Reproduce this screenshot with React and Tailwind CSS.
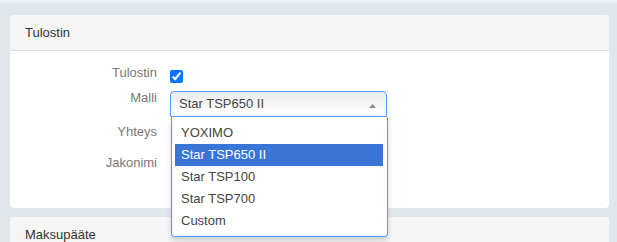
import React from "react";

const font = { fontFamily: '"Liberation Sans", Arial, sans-serif' };

function Panel({ title, children, className = "" }) {
  return (
    <div className={"bg-white rounded-[4px] overflow-visible " + className}>
      <div className="h-[36px] bg-[#f5f5f5] border-b border-[#dddddd] rounded-t-[4px] px-[15px] flex items-center text-[13px] text-[#333333]">
        {title}
      </div>
      {children}
    </div>
  );
}

export default function App() {
  const options = ["YOXIMO", "Star TSP650 II", "Star TSP100", "Star TSP700", "Custom"];
  return (
    <div className="w-[617px] h-[242px] overflow-hidden bg-[#dfe6ec]" style={font}>
      <div className="h-[3px] bg-[#edf1f5] border-b border-[#e6ebf0]" />
      <div className="pt-[12px] pl-[10px] pr-[8px] flex flex-col gap-[9px]">
        <Panel title="Tulostin">
          <div className="h-[157px] pt-[12px] flex flex-col text-[13px]">
            <div className="flex h-[25px]">
              <div className="w-[147px] text-right text-[#777777] leading-[20px]">Tulostin</div>
              <div className="ml-[13px] pt-[7px]">
                <input type="checkbox" defaultChecked className="w-[13px] h-[13px] m-0 block accent-[#0075ff]" />
              </div>
            </div>
            <div className="flex h-[34px]">
              <div className="w-[147px] text-right text-[#777777] leading-[20px]">Malli</div>
              <div className="ml-[13px] pt-[3px] relative z-10">
                <div className="w-[217px] h-[26px] border border-[#5897fb] rounded-t-[4px] bg-gradient-to-b from-[#eeeeee] from-20% to-white to-80% pl-[8px] flex items-center text-[#444444] relative">
                  <span className="leading-[24px]">Star TSP650 II</span>
                  <svg width="7" height="4" viewBox="0 0 7 4" className="absolute right-[10px] top-[12px]">
                    <polygon points="3.5,0 7,4 0,4" fill="#8a8a8a" />
                  </svg>
                </div>
                <div className="absolute left-[1px] top-[29px] w-[217px] bg-white border border-t-0 border-[#5897fb] rounded-b-[4px] shadow-[0_4px_5px_rgba(0,0,0,0.15)] pt-[5px] pb-[4px] pl-[3px] pr-[4px]">
                  {options.map((o) => (
                    <div
                      key={o}
                      className={
                        "h-[22px] leading-[22px] px-[6px] text-[13px] " +
                        (o === "Star TSP650 II" ? "bg-[#3875d7] text-white" : "text-[#444444]")
                      }
                    >
                      {o}
                    </div>
                  ))}
                </div>
              </div>
            </div>
            <div className="flex h-[31px]">
              <div className="w-[147px] text-right text-[#777777] leading-[20px]">Yhteys</div>
            </div>
            <div className="flex h-[31px]">
              <div className="w-[147px] text-right text-[#777777] leading-[20px]">Jakonimi</div>
            </div>
          </div>
        </Panel>
        <Panel title="Maksupääte">
          <div className="h-[40px]" />
        </Panel>
      </div>
    </div>
  );
}
